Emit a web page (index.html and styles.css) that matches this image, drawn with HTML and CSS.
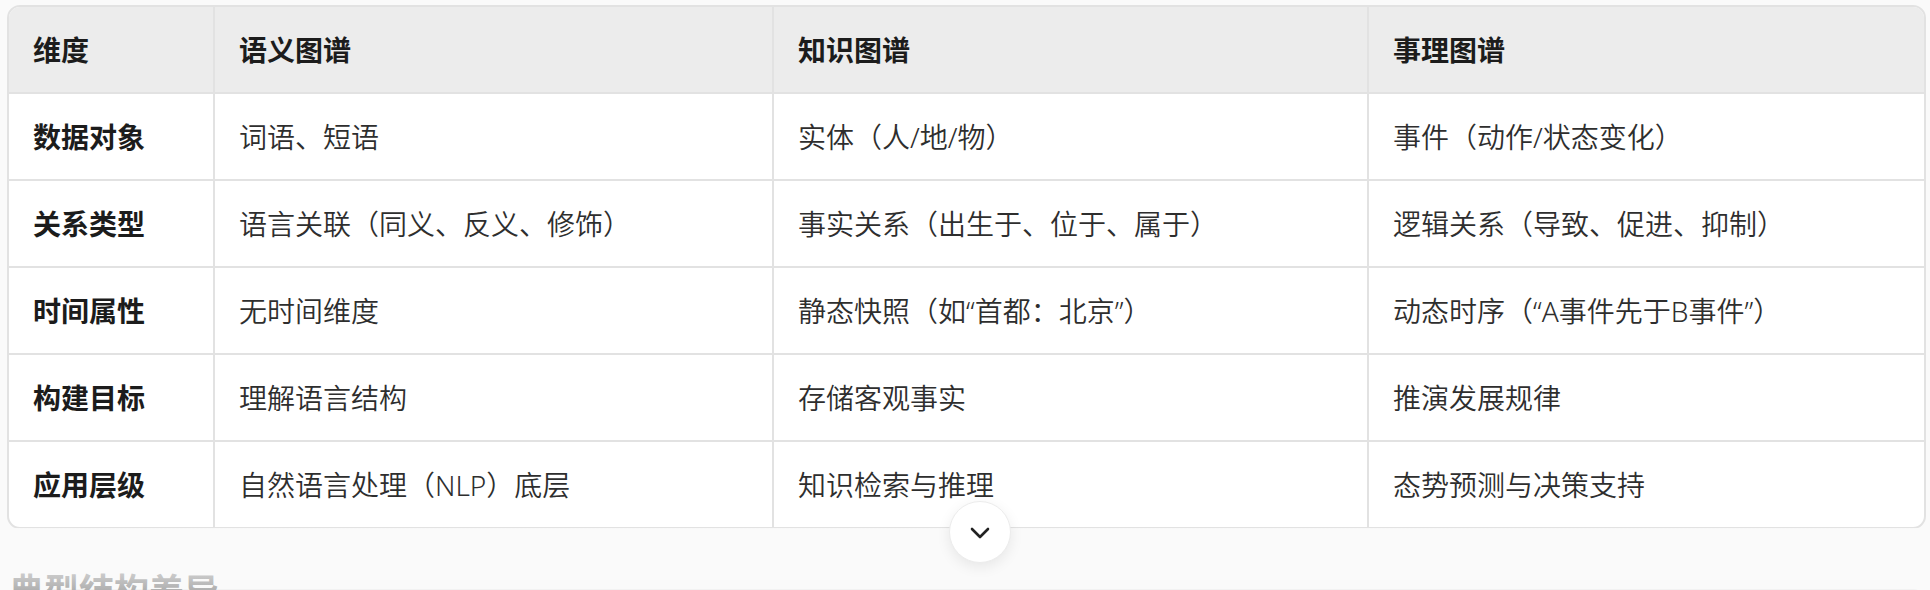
FILE: index.html
```html
<!DOCTYPE html>
<html lang="zh">
<head>
<meta charset="utf-8">
<link rel="stylesheet" href="styles.css">
</head>
<body>
<div class="page">
  <div class="table-wrap">
    <table class="cmp">
      <colgroup>
        <col class="c1"><col class="c2"><col class="c3"><col class="c4">
      </colgroup>
      <thead>
        <tr><th>维度</th><th>语义图谱</th><th>知识图谱</th><th>事理图谱</th></tr>
      </thead>
      <tbody>
        <tr><td class="k">数据对象</td><td>词语、短语</td><td>实体（人/地/物）</td><td>事件（动作/状态变化）</td></tr>
        <tr><td class="k">关系类型</td><td>语言关联（同义、反义、修饰）</td><td>事实关系（出生于、位于、属于）</td><td>逻辑关系（导致、促进、抑制）</td></tr>
        <tr><td class="k">时间属性</td><td>无时间维度</td><td>静态快照（如“首都：北京”）</td><td>动态时序（“A事件先于B事件”）</td></tr>
        <tr><td class="k">构建目标</td><td>理解语言结构</td><td>存储客观事实</td><td>推演发展规律</td></tr>
        <tr><td class="k">应用层级</td><td>自然语言处理（NLP）底层</td><td>知识检索与推理</td><td>态势预测与决策支持</td></tr>
      </tbody>
    </table>
  </div>
  <h2 class="next-title">典型结构差异</h2>
  <div class="next-box"></div>
  <div class="fade"></div>
  <button class="more" aria-label="展开">
    <svg width="22" height="14" viewBox="0 0 22 14"><path d="M3 3 L11 11 L19 3" fill="none" stroke="#222" stroke-width="2.6" stroke-linecap="round" stroke-linejoin="round"/></svg>
  </button>
</div>
</body>
</html>
```

FILE: styles.css
```css
html, body {
  margin: 0;
  padding: 0;
  background: #fafafa;
}
body {
  font-family: "Noto Sans", "Noto Sans CJK SC", sans-serif;
  color: #2b2b2b;
  overflow: hidden;
}
.page {
  position: relative;
  height: 590px;
  overflow: hidden;
  padding: 5px 4px 0 7px;
  box-sizing: border-box;
}
.table-wrap {
  border: 2px solid #e2e2e2;
  border-radius: 13px;
  overflow: hidden;
  background: #fff;
}
.cmp {
  width: 100%;
  border-collapse: collapse;
  table-layout: fixed;
  font-size: 28px;
  line-height: 42px;
}
.c1 { width: 205px; }
.c2 { width: 559px; }
.c3 { width: 595px; }
.c4 { width: auto; }
.cmp th, .cmp td {
  text-align: left;
  padding: 22px 24px 21px 24px;
  border-left: 2px solid #e2e2e2;
  border-top: 2px solid #e2e2e2;
  font-family: "Noto Sans", "Noto Sans CJK SC", sans-serif;
}
.cmp th:first-child, .cmp td:first-child { border-left: none; }
.cmp thead th {
  border-top: none;
  background: #ececec;
  font-weight: 700;
  color: #1c1c1c;
  padding-top: 22px;
  padding-bottom: 21px;
}
.cmp td { color: #2e2e2e; font-weight: 350; }
.cmp td.k { font-weight: 700; color: #1c1c1c; }
.next-title {
  margin: 39px 0 0 2px;
  font-size: 35px;
  line-height: 46px;
  font-weight: 700;
  color: #222;
  font-family: "Noto Sans", "Noto Sans CJK SC", sans-serif;
}
.next-box {
  margin: -25px 0 0 34px;
  height: 60px;
  border: 2px solid #e2e2e2;
  border-radius: 13px;
  background: #fff;
}
.fade {
  position: absolute;
  left: 0;
  right: 0;
  top: 528px;
  bottom: 0;
  background: linear-gradient(to bottom, rgba(250,250,250,0.92) 0%, rgba(250,250,250,0.8) 70%, rgba(250,250,250,0.66) 100%);
}
.more {
  position: absolute;
  left: 949px;
  top: 501px;
  width: 62px;
  height: 62px;
  border-radius: 50%;
  border: 1px solid #ececec;
  background: #fff;
  box-shadow: 0 4px 14px rgba(0,0,0,0.08);
  display: flex;
  align-items: center;
  justify-content: center;
  padding: 0;
}
.more svg { display: block; margin-top: 2px; }
```
